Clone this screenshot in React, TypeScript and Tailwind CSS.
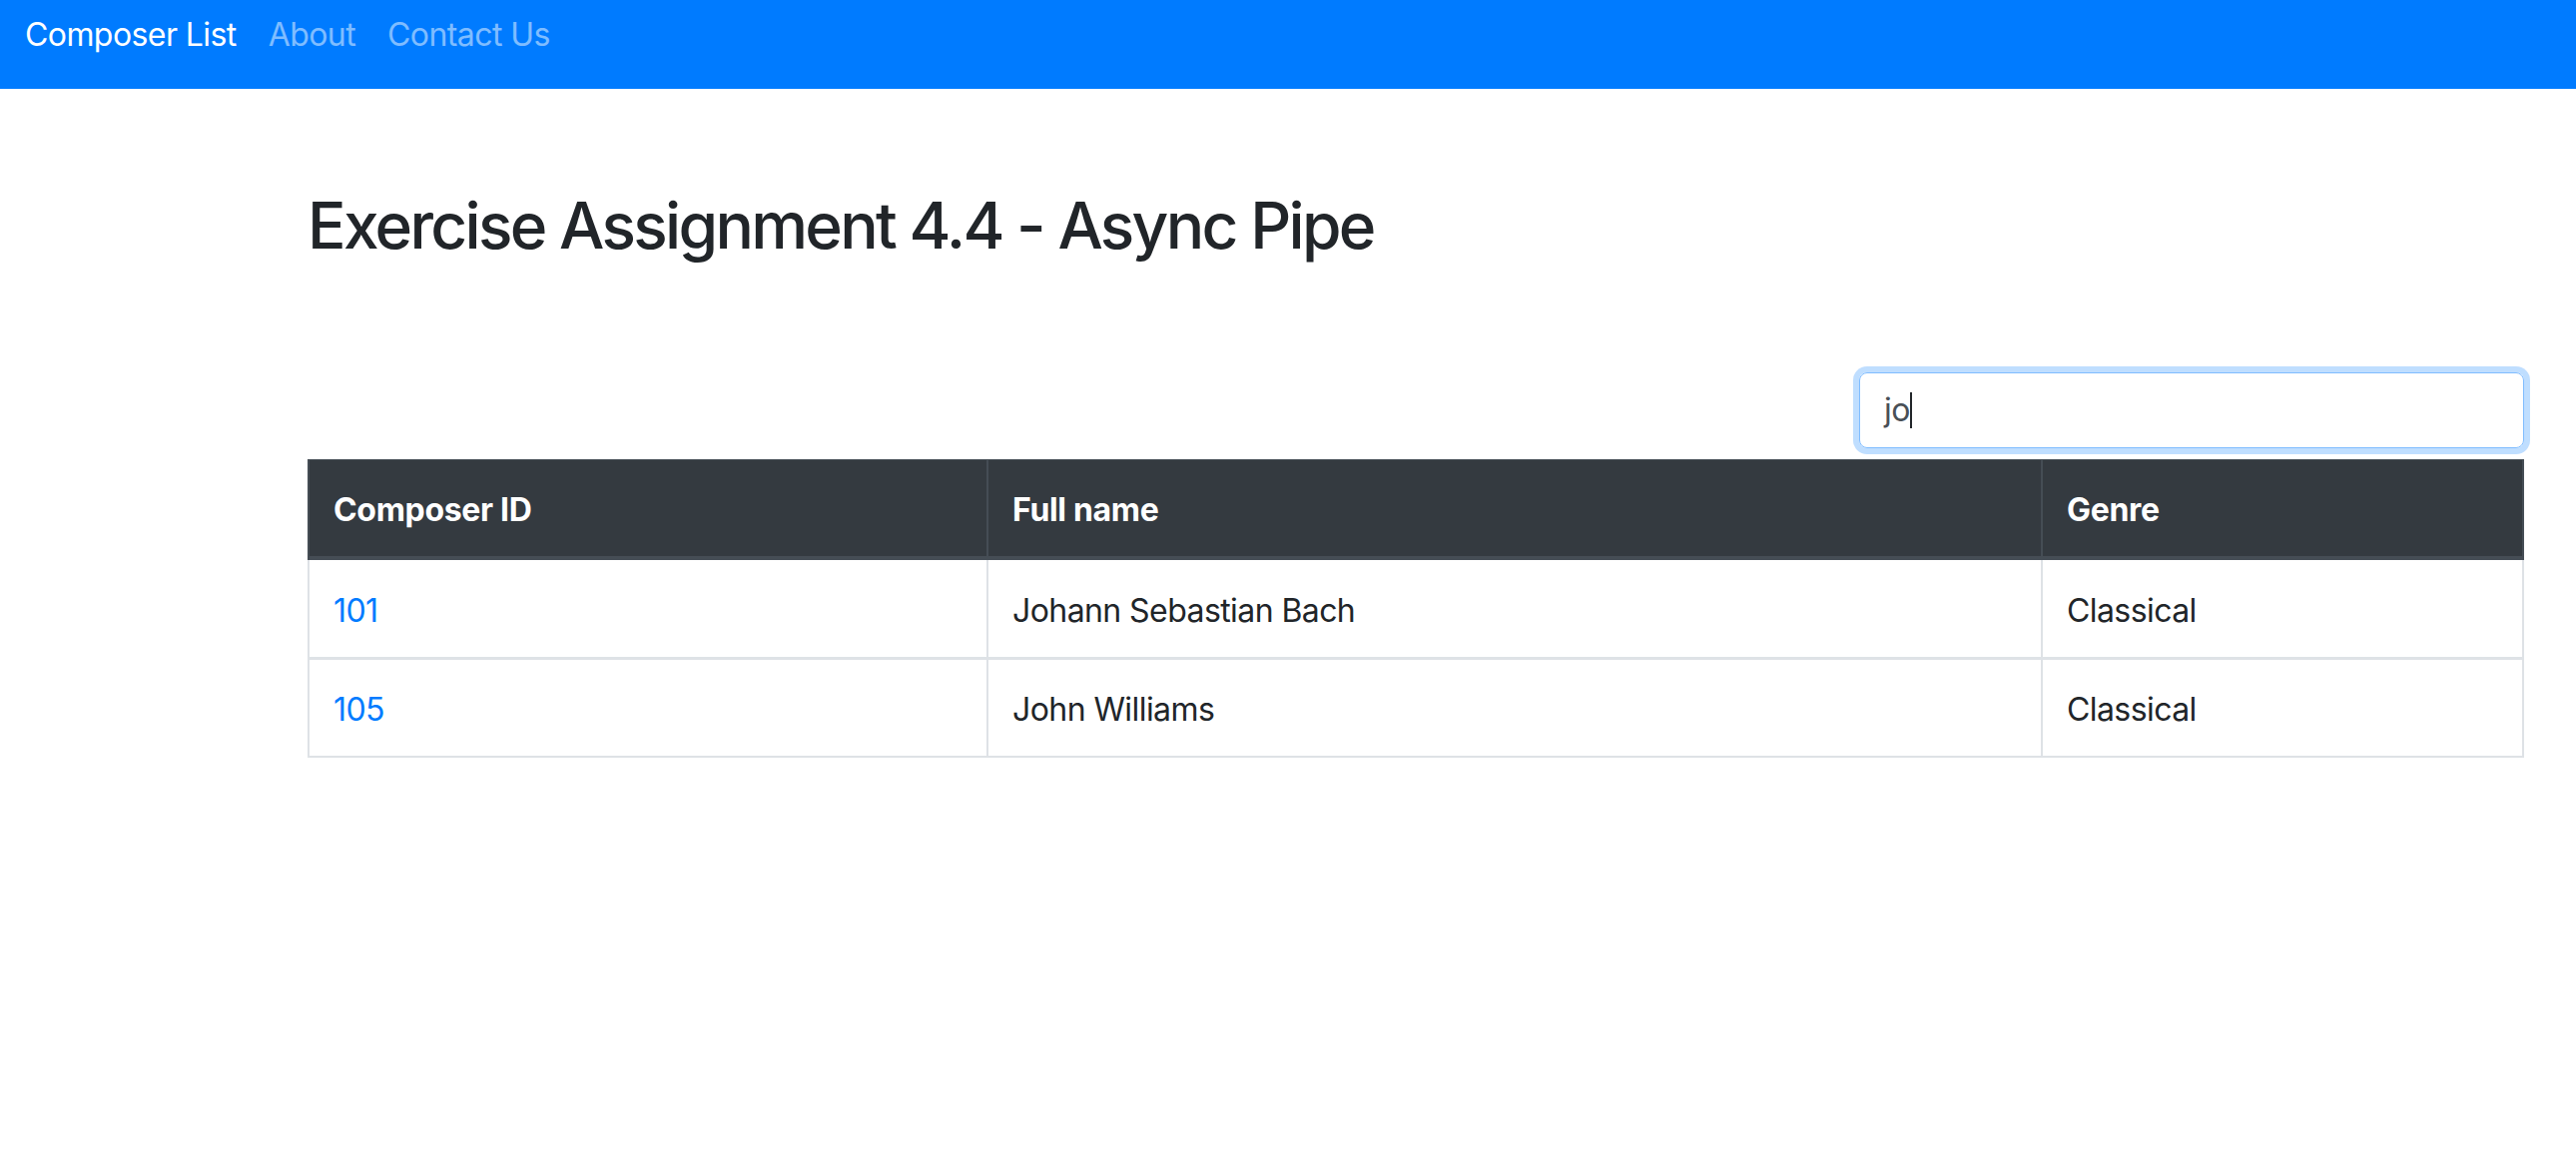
const rows = [
	{ id: 101, name: "Johann Sebastian Bach", genre: "Classical" },
	{ id: 105, name: "John Williams", genre: "Classical" },
]

export default function App() {
	return (
		<div className="min-h-screen bg-white font-[Inter,'Noto_Sans',sans-serif] text-[#212529] tracking-[-0.036em]">
			<nav className="h-[89px] bg-[#007bff] pl-[25px] pt-[11px] flex items-start gap-[32px] text-[32px] leading-[48px]">
				<a className="text-white">Composer List</a>
				<a className="text-white/50">About</a>
				<a className="text-white/50">Contact Us</a>
			</nav>

			<main className="pl-[308px] pr-[52px] w-[2580px]">
				<h1 className="mt-[99px] text-[64px] leading-[1.2] font-medium tracking-[-0.042em]">
					Exercise Assignment 4.4 - Async Pipe
				</h1>

				<div className="mt-[108px] flex justify-end">
					<div className="w-[666px] h-[76px] border border-[#80bdff] rounded-[8px] shadow-[0_0_0_6px_rgba(0,123,255,0.25)] px-[24px] flex items-center text-[32px] text-[#495057]">
						<span>jo</span>
						<span className="w-[2px] h-[36px] bg-[#212529]"></span>
					</div>
				</div>

				<table className="mt-[11px] w-[2220px] table-fixed border-separate border-spacing-0 text-[32px] leading-[48px]">
					<thead>
						<tr className="bg-[#343a40] text-white font-bold text-left tracking-[-0.01em]">
							<th className="w-[682px] border-t border-l-2 border-r-2 border-b-4 border-[#454d55] px-[24px] pt-[26px] pb-[22px]">
								Composer ID
							</th>
							<th className="w-[1056px] border-t border-r-2 border-b-4 border-[#454d55] px-[24px] pt-[26px] pb-[22px]">
								Full name
							</th>
							<th className="w-[482px] border-t border-r-2 border-b-4 border-[#454d55] px-[24px] pt-[26px] pb-[22px]">
								Genre
							</th>
						</tr>
					</thead>
					<tbody>
						{rows.map((r, i) => {
							const edge = i === rows.length - 1 ? "border-b-2 pt-[26px] pb-[22px]" : "border-b-[3px] pt-[27px] pb-[22px]"
							return (
								<tr key={r.id}>
									<td className={`border-l-2 border-r-2 border-[#dee2e6] px-[24px] ${edge}`}>
										<a className="text-[#007bff]">{r.id}</a>
									</td>
									<td className={`border-r-2 border-[#dee2e6] px-[24px] ${edge}`}>{r.name}</td>
									<td className={`border-r-2 border-[#dee2e6] px-[24px] ${edge}`}>{r.genre}</td>
								</tr>
							)
						})}
					</tbody>
				</table>
			</main>
		</div>
	)
}
